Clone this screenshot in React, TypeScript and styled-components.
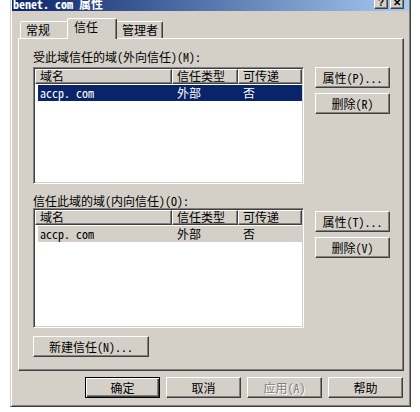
import React from "react";
import styled, { createGlobalStyle, css } from "styled-components";

const FONT = `"Noto Sans Mono CJK SC", "Noto Sans CJK SC", "Liberation Sans", sans-serif`;

const GlobalStyle = createGlobalStyle`
	html, body { margin: 0; padding: 0; background: #fff; }
	body { font-family: ${FONT}; font-size: 12px; color: #000; }
	* { box-sizing: border-box; }
`;

const Screen = styled.div`
	width: 420px;
	height: 412px;
	overflow: hidden;
	padding-left: 10px;
	background: #fff;
`;

const Window = styled.div`
	width: 401px;
	height: 407px;
	background: #d4d0c8;
	border: 1px solid;
	border-top: none;
	border-color: #d4d0c8 #404040 #404040 #d4d0c8;
	box-shadow: inset 1px 0 #fff, inset -1px -1px #808080;
	padding: 0 1px 1px 1px;
	display: flex;
	flex-direction: column;
`;

const TitleBar = styled.div`
	height: 11px;
	display: flex;
	align-items: flex-start;
	justify-content: space-between;
	padding: 0 5px 0 1px;
	background: linear-gradient(to right, #0a246a, #a6caf0);
	overflow: hidden;
`;

const TitleText = styled.div`
	color: #fff;
	font-weight: bold;
	font-size: 12px;
	line-height: 12px;
	margin-top: -2px;
	white-space: pre;
`;

const TitleButtons = styled.div`
	display: flex;
	gap: 2px;
	margin-top: -4px;
`;

const TitleButton = styled.div`
	width: 14px;
	height: 13px;
	background: #d4d0c8;
	border: 1px solid;
	border-color: #fff #404040 #404040 #fff;
	box-shadow: inset -1px -1px #808080;
	font-family: "Liberation Sans", sans-serif;
	font-weight: bold;
	font-size: 10px;
	line-height: 11px;
	text-align: center;
`;

const Body = styled.div`
	flex: 1;
	display: flex;
	flex-direction: column;
	padding: 7px 5px 0 6px;
`;

const TabRow = styled.div`
	display: flex;
	align-items: flex-end;
	height: 20px;
	padding-left: 2px;
	position: relative;
	z-index: 1;
`;

const Tab = styled.div<{ $active?: boolean; $w: number; $pl: number }>`
	position: relative;
	z-index: ${(p) => (p.$active ? 2 : 1)};
	width: ${(p) => p.$w}px;
	height: ${(p) => (p.$active ? 21 : 17)}px;
	margin: ${(p) => (p.$active ? "0 -2px -1px -2px" : "0")};
	padding-left: ${(p) => p.$pl}px;
	background: #d4d0c8;
	border-top: 1px solid #fff;
	border-left: 1px solid #fff;
	border-right: 1px solid #404040;
	box-shadow: inset -1px 0 #808080;
	border-radius: 2px 2px 0 0;
	line-height: 16px;
	white-space: nowrap;
`;

const Panel = styled.div`
	height: 333px;
	background: #d4d0c8;
	border: 1px solid;
	border-color: #fff #404040 #404040 #fff;
	box-shadow: inset -1px -1px #808080;
	padding: 11px 0 0 14px;
	display: flex;
	flex-direction: column;
`;

const Section = styled.div<{ $mt?: number }>`
	display: grid;
	grid-template-columns: 271px 75px;
	column-gap: 11px;
	margin-top: ${(p) => p.$mt ?? 0}px;
`;

const Label = styled.div<{ $mb: number }>`
	grid-column: 1 / -1;
	line-height: 13px;
	margin-bottom: ${(p) => p.$mb}px;
	white-space: nowrap;
`;

const SideButtons = styled.div<{ $pt: number }>`
	display: flex;
	flex-direction: column;
	gap: 5px;
	padding-top: ${(p) => p.$pt}px;
`;

const ListBox = styled.div<{ $h: number }>`
	width: 271px;
	height: ${(p) => p.$h}px;
	background: #fff;
	border: 1px solid;
	border-color: #808080 #fff #fff #808080;
	box-shadow: inset 1px 1px #404040, inset -1px -1px #d4d0c8;
	padding: 1px;
	overflow: hidden;
`;

const HeaderRow = styled.div`
	display: grid;
	grid-template-columns: 137px 66px 64px;
	height: 15px;
`;

const HeaderCell = styled.div`
	background: #d4d0c8;
	border-top: 1px solid #fff;
	border-left: 1px solid #fff;
	border-right: 1px solid #404040;
	border-bottom: 1px solid #404040;
	box-shadow: inset -1px -1px #808080;
	padding-left: 4px;
	line-height: 12px;
	white-space: nowrap;
	overflow: hidden;
`;

const Row = styled.div<{ $state: "active" | "inactive" }>`
	display: grid;
	grid-template-columns: 134px 66px 64px;
	height: 16px;
	margin: 1px 0 0 3px;
	line-height: 16px;
	${(p) =>
		p.$state === "active"
			? css`
					background: #0a246a;
					color: #fff;
			  `
			: css`
					background: #d4d0c8;
					color: #000;
			  `}
`;

const Cell = styled.div<{ $first?: boolean }>`
	padding-left: ${(p) => (p.$first ? 2 : 5)}px;
	white-space: nowrap;
`;

const Button = styled.button<{ $w?: number; $default?: boolean }>`
	width: ${(p) => p.$w ?? 75}px;
	height: 21px;
	padding: 0;
	margin: 0;
	font-family: ${FONT};
	font-size: 12px;
	line-height: 17px;
	color: #000;
	background: #d4d0c8;
	border: 1px solid;
	border-color: #fff #404040 #404040 #fff;
	box-shadow: inset -1px -1px #808080;
	white-space: nowrap;
	${(p) =>
		p.$default &&
		css`
			border-color: #000;
			box-shadow: inset 1px 1px #fff, inset -1px -1px #404040, inset -2px -2px #808080;
		`}
	&:disabled {
		color: #808080;
		text-shadow: 1px 1px #fff;
	}
`;

const Footer = styled.div`
	display: flex;
	justify-content: flex-end;
	gap: 6px;
	margin-top: 6px;
	padding-right: 1px;
`;

interface TrustListProps {
	height: number;
	state: "active" | "inactive";
}

const TrustList = ({ height, state }: TrustListProps) => (
	<ListBox $h={height}>
		<HeaderRow>
			<HeaderCell>域名</HeaderCell>
			<HeaderCell>信任类型</HeaderCell>
			<HeaderCell>可传递</HeaderCell>
		</HeaderRow>
		<Row $state={state}>
			<Cell $first>accp. com</Cell>
			<Cell>外部</Cell>
			<Cell>否</Cell>
		</Row>
	</ListBox>
);

export default function App() {
	return (
		<Screen>
			<GlobalStyle />
			<Window>
				<TitleBar>
					<TitleText>benet. com 属性</TitleText>
					<TitleButtons>
						<TitleButton>?</TitleButton>
						<TitleButton>✕</TitleButton>
					</TitleButtons>
				</TitleBar>
				<Body>
					<TabRow>
						<Tab $w={49} $pl={5}>常规</Tab>
						<Tab $w={50} $pl={6} $active>信任</Tab>
						<Tab $w={48} $pl={6}>管理者</Tab>
					</TabRow>
					<Panel>
						<Section>
							<Label $mb={4}>受此域信任的域(外向信任)(M):</Label>
							<TrustList height={117} state="active" />
							<SideButtons $pt={0}>
								<Button>属性(P)...</Button>
								<Button>删除(R)</Button>
							</SideButtons>
						</Section>
						<Section $mt={10}>
							<Label $mb={1}>信任此域的域(内向信任)(O):</Label>
							<TrustList height={120} state="inactive" />
							<SideButtons $pt={3}>
								<Button>属性(T)...</Button>
								<Button>删除(V)</Button>
							</SideButtons>
						</Section>
						<Section $mt={8}>
							<Button $w={116}>新建信任(N)...</Button>
						</Section>
					</Panel>
					<Footer>
						<Button $default>确定</Button>
						<Button>取消</Button>
						<Button disabled>应用(A)</Button>
						<Button>帮助</Button>
					</Footer>
				</Body>
			</Window>
		</Screen>
	);
}
